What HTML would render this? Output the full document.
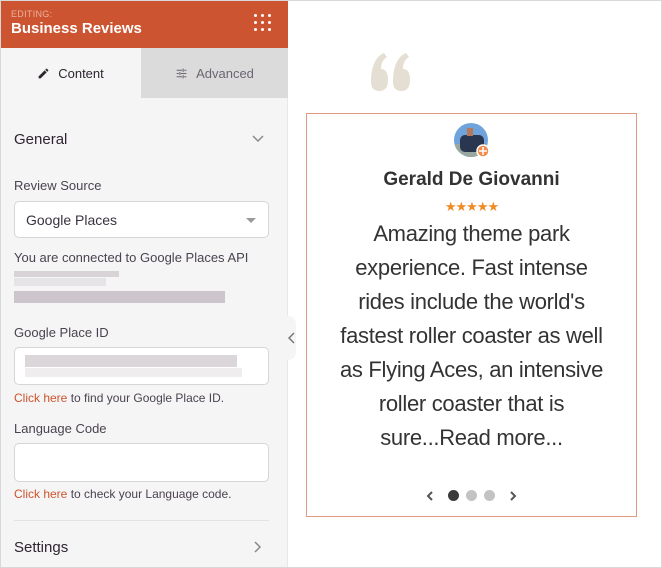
<!DOCTYPE html>
<html><head><meta charset="utf-8"><style>
*{margin:0;padding:0;box-sizing:border-box}
body{width:662px;height:568px;overflow:hidden;background:#fff;font-family:"Liberation Sans",sans-serif;position:relative}
.frame{position:absolute;left:0;top:0;width:662px;height:568px;border:1px solid #d8d8d8;pointer-events:none;z-index:10}
.side{position:absolute;left:0;top:0;width:288px;height:568px;background:#f5f5f5;border-right:1px solid #e8e8e8}
.hdr{position:absolute;left:0;top:0;width:288px;height:48px;background:#cc5430}
.hdr .ed{position:absolute;left:11px;top:9px;font-size:9px;color:#efb19c;letter-spacing:.3px}
.hdr .t{position:absolute;left:11px;top:20px;font-size:15px;color:#fff;font-weight:bold}
.dots{position:absolute;left:254px;top:14px;width:18px;height:18px}
.dots i{position:absolute;width:3px;height:3px;background:#fff;border-radius:50%}
.tab{position:absolute;top:48px;height:50px;font-size:13px;display:flex;align-items:center;justify-content:center;gap:8px}
.t1{left:0;width:141px;color:#2e2530}
.t2{left:141px;width:147px;background:#dcdbdc;color:#6b6570}
.lbl{position:absolute;left:14px;font-size:13px;color:#4b4350}
.inp{position:absolute;left:14px;width:255px;background:#fff;border:1px solid #d6d6d6;border-radius:5px}
.lnk{color:#cc5430}
.blur{position:absolute;background:#ccc5cb}
.card{position:absolute;left:306px;top:113px;width:331px;height:404px;border:1.5px solid #e09883}
.rev{position:absolute;left:306px;width:331px;top:217px;text-align:center;font-family:"Liberation Sans",sans-serif;font-size:22px;line-height:34px;color:#333;white-space:nowrap;letter-spacing:-0.3px}
</style></head><body>
<div class="side">
 <div class="hdr"><div class="ed">EDITING:</div><div class="t">Business Reviews</div>
  <div class="dots">
   <i style="left:0;top:0"></i><i style="left:7px;top:0"></i><i style="left:14px;top:0"></i>
   <i style="left:0;top:7px"></i><i style="left:7px;top:7px"></i><i style="left:14px;top:7px"></i>
   <i style="left:0;top:14px"></i><i style="left:7px;top:14px"></i><i style="left:14px;top:14px"></i>
  </div></div>
 <div class="tab t1"><svg width="13" height="13" viewBox="0 0 24 24"><path d="M3 17.25V21h3.75L17.8 9.94l-3.75-3.75zM20.7 7.04a1 1 0 000-1.41l-2.34-2.34a1 1 0 00-1.41 0l-1.83 1.83 3.75 3.75z" fill="#2e2530"/></svg>Content</div>
 <div class="tab t2"><svg width="13" height="13" viewBox="0 0 24 24" fill="none" stroke="#6b6570" stroke-width="2"><path d="M3 6h10M17 6h4M15 3v6M3 12h4M11 12h10M9 9v6M3 18h10M17 18h4M15 15v6"/></svg>Advanced</div>
 <div class="lbl" style="top:131px;font-size:15px;color:#2e2530">General</div>
 <svg style="position:absolute;left:252px;top:135px" width="12" height="8" viewBox="0 0 12 8"><path d="M1 1l5 5 5-5" stroke="#888" stroke-width="1.5" fill="none"/></svg>
 <div class="lbl" style="top:178px">Review Source</div>
 <div class="inp" style="top:201px;height:37px"><span style="position:absolute;left:11px;top:10px;font-size:14px;color:#3a3240">Google Places</span>
  <svg style="position:absolute;left:231px;top:16px" width="10" height="6"><path d="M0 0h10L5 5z" fill="#999"/></svg></div>
 <div class="lbl" style="top:250px">You are connected to Google Places API</div>
 <div class="blur" style="left:14px;top:271px;width:105px;height:6px;opacity:.7"></div>
 <div class="blur" style="left:14px;top:278px;width:92px;height:8px;opacity:.35"></div>
 <div class="blur" style="left:14px;top:291px;width:211px;height:12px"></div>
 <div class="lbl" style="top:325px">Google Place ID</div>
 <div class="inp" style="top:347px;height:38px"><div class="blur" style="left:10px;top:7px;width:212px;height:12px;opacity:.7"></div><div class="blur" style="left:10px;top:20px;width:217px;height:9px;opacity:.3"></div></div>
 <div class="lbl" style="top:391px;font-size:12px"><span class="lnk">Click here</span> to find your Google Place ID.</div>
 <div class="lbl" style="top:421px">Language Code</div>
 <div class="inp" style="top:443px;height:39px"></div>
 <div class="lbl" style="top:487px;font-size:12px"><span class="lnk">Click here</span> to check your Language code.</div>
 <div style="position:absolute;left:14px;top:520px;width:255px;height:1px;background:#e2e2e2"></div>
 <div class="lbl" style="top:539px;font-size:15px;color:#2e2530">Settings</div>
 <svg style="position:absolute;left:254px;top:541px" width="8" height="12"><path d="M1 1l5 5-5 5" stroke="#888" stroke-width="1.5" fill="none"/></svg>
</div>
<div style="position:absolute;left:282px;top:316px;width:14px;height:44px;background:#f5f5f5;border-radius:0 8px 8px 0"></div>
<svg style="position:absolute;left:288px;top:332px" width="8" height="12"><path d="M6 1L1 6l5 5" stroke="#777" stroke-width="1.5" fill="none"/></svg>
<svg style="position:absolute;left:369px;top:52px" width="44" height="40" viewBox="0 0 44 40">
 <path d="M2 30C2 18 5 5 15 1l3 4c-5 3-6 8-6 12c5 0 7 4 7 11c0 7-3 11-8 11C4 39 2 35 2 30z" fill="#e5dfd3"/>
 <path d="M24 30C24 18 27 5 37 1l3 4c-5 3-6 8-6 12c5 0 7 4 7 11c0 7-3 11-8 11C26 39 24 35 24 30z" fill="#e5dfd3"/>
</svg>
<div class="card"></div>
<svg style="position:absolute;left:453px;top:122px" width="38" height="38" viewBox="0 0 38 38">
 <defs><clipPath id="c"><circle cx="18" cy="18" r="17"/></clipPath></defs>
 <g clip-path="url(#c)"><rect width="38" height="38" fill="#6fa3dc"/><rect y="22" width="38" height="16" fill="#9aa6a0"/><rect x="7" y="13" width="24" height="17" rx="5" fill="#2a3550"/><rect x="14" y="6" width="6" height="8" fill="#b5795a"/></g>
 <circle cx="30" cy="29" r="6" fill="#f28c4e" stroke="#fff" stroke-width="1.5"/><path d="M30 25v8M26 29h8" stroke="#fff" stroke-width="1.5"/></svg>
<div style="position:absolute;left:306px;width:331px;top:169px;text-align:center;font-size:19px;font-weight:bold;color:#333">Gerald De Giovanni</div>
<div style="position:absolute;left:306px;width:331px;top:199px;text-align:center;font-size:13px;color:#f08a24;letter-spacing:-1px">★★★★★</div>
<div class="rev">Amazing theme park<br>experience. Fast intense<br>rides include the world's<br>fastest roller coaster as well<br>as Flying Aces, an intensive<br>roller coaster that is<br>sure...Read more...</div>
<svg style="position:absolute;left:426px;top:491px" width="8" height="10"><path d="M6 1L2 5l4 4" stroke="#555" stroke-width="2" fill="none"/></svg>
<div style="position:absolute;left:448px;top:490px;width:11px;height:11px;border-radius:50%;background:#3b3b3b"></div>
<div style="position:absolute;left:466px;top:490px;width:11px;height:11px;border-radius:50%;background:#c3c3c3"></div>
<div style="position:absolute;left:484px;top:490px;width:11px;height:11px;border-radius:50%;background:#c3c3c3"></div>
<svg style="position:absolute;left:509px;top:491px" width="8" height="10"><path d="M2 1l4 4-4 4" stroke="#555" stroke-width="2" fill="none"/></svg>
<div class="frame"></div>
</body></html>
